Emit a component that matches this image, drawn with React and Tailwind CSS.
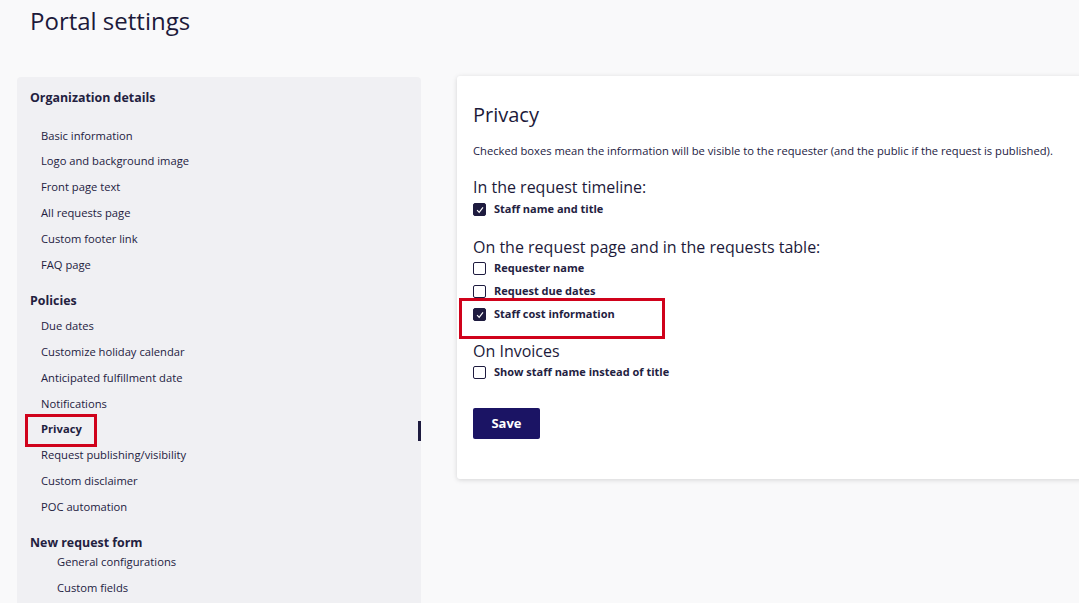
import React from 'react';

const orgItems = [
    'Basic information',
    'Logo and background image',
    'Front page text',
    'All requests page',
    'Custom footer link',
    'FAQ page',
];

const policyItems = [
    'Due dates',
    'Customize holiday calendar',
    'Anticipated fulfillment date',
    'Notifications',
    'Privacy',
    'Request publishing/visibility',
    'Custom disclaimer',
    'POC automation',
];

function Checkbox({ checked }) {
    return (
        <span
            className={
                'flex h-[13px] w-[13px] shrink-0 items-center justify-center rounded-[2px] border-[1.5px] border-[#1e1b3f] ' +
                (checked ? 'bg-[#1e1b3f]' : 'bg-white')
            }
        >
            {checked && (
                <svg viewBox="0 0 12 12" className="h-[10px] w-[10px]" fill="none" stroke="white" strokeWidth="1.4">
                    <path d="M2.5 6.2 L5 8.8 L9.6 2.8" />
                </svg>
            )}
        </span>
    );
}

function Row({ checked, label, boxed }) {
    return (
        <div className="relative flex h-[23px] items-center gap-2">
            <Checkbox checked={checked} />
            <span className="text-[11px] font-bold text-[#23213f]">{label}</span>
            {boxed && (
                <span className="absolute left-[-14px] top-[-5px] h-[41px] w-[206px] border-[3px] border-[#d0021b]" />
            )}
        </div>
    );
}

export default function App() {
    return (
        <div
            className="h-[603px] w-[1079px] overflow-hidden bg-[#f9f9fa] text-[#23213f]"
            style={{ fontFamily: '"Open Sans", sans-serif' }}
        >
            <h1 className="ml-[30px] pt-[6px] text-[24px] leading-[30px] text-[#1c1a3a]">Portal settings</h1>

            <div className="mt-[41px] flex items-start gap-[36px]">
                {/* sidebar */}
                <div className="ml-[17px] h-[530px] w-[404px] shrink-0 rounded-t-[4px] bg-[#f0f0f3] pt-[12px]">
                    <div className="pl-[13px] text-[12.4px] font-bold leading-[18px]">Organization details</div>
                    <div className="mt-[16px]">
                        {orgItems.map(item => (
                            <div key={item} className="flex h-[25.85px] items-center pl-[24px] text-[11.2px]">
                                {item}
                            </div>
                        ))}
                    </div>

                    <div className="mt-[14px] pl-[13px] text-[12.4px] font-bold leading-[18px]">Policies</div>
                    <div className="mt-[3.5px]">
                        {policyItems.map(item => (
                            <div
                                key={item}
                                className={
                                    'relative flex h-[25.85px] items-center pl-[24px] text-[11.2px] ' +
                                    (item === 'Privacy' ? 'font-bold' : '')
                                }
                            >
                                {item}
                                {item === 'Privacy' && (
                                    <>
                                        <span className="absolute left-[8px] top-[-3px] h-[33px] w-[72px] border-[3px] border-[#d0021b]" />
                                        <span className="absolute right-0 top-[4px] h-[20px] w-[3px] bg-[#1e1b3f]" />
                                    </>
                                )}
                            </div>
                        ))}
                    </div>

                    <div className="mt-[14px] pl-[13px] text-[12.4px] font-bold leading-[18px]">New request form</div>
                    <div className="-mt-[3px]">
                        {['General configurations', 'Custom fields'].map(item => (
                            <div key={item} className="flex h-[25.85px] items-center pl-[40px] text-[11.2px]">
                                {item}
                            </div>
                        ))}
                    </div>
                </div>

                {/* main card */}
                <div className="-mt-[1px] w-[660px] shrink-0 rounded-l-[3px] bg-white pb-[40px] pl-[16px] pt-[25px] shadow-[0_1px_5px_rgba(0,0,0,0.15)]">
                    <h2 className="text-[20px] leading-[28px] text-[#1c1a3a]">Privacy</h2>
                    <p className="mt-[14px] text-[11.2px] leading-[16px] text-[#23213f]">
                        Checked boxes mean the information will be visible to the requester (and the public if the request is published).
                    </p>

                    <h3 className="mt-[18px] text-[16px] leading-[20px] text-[#1c1a3a]">In the request timeline:</h3>
                    <div className="mt-[1px]">
                        <Row checked label="Staff name and title" />
                    </div>

                    <h3 className="mt-[16px] text-[16px] leading-[20px] text-[#1c1a3a]">
                        On the request page and in the requests table:
                    </h3>
                    <Row label="Requester name" />
                    <Row label="Request due dates" />
                    <Row checked boxed label="Staff cost information" />

                    <h3 className="mt-[15px] text-[16px] leading-[20px] text-[#1c1a3a]">On Invoices</h3>
                    <Row label="Show staff name instead of title" />

                    <button className="mt-[24px] h-[31px] w-[67px] rounded-[2px] bg-[#1b1464] text-[13px] font-bold text-white">
                        Save
                    </button>
                </div>
            </div>
        </div>
    );
}
